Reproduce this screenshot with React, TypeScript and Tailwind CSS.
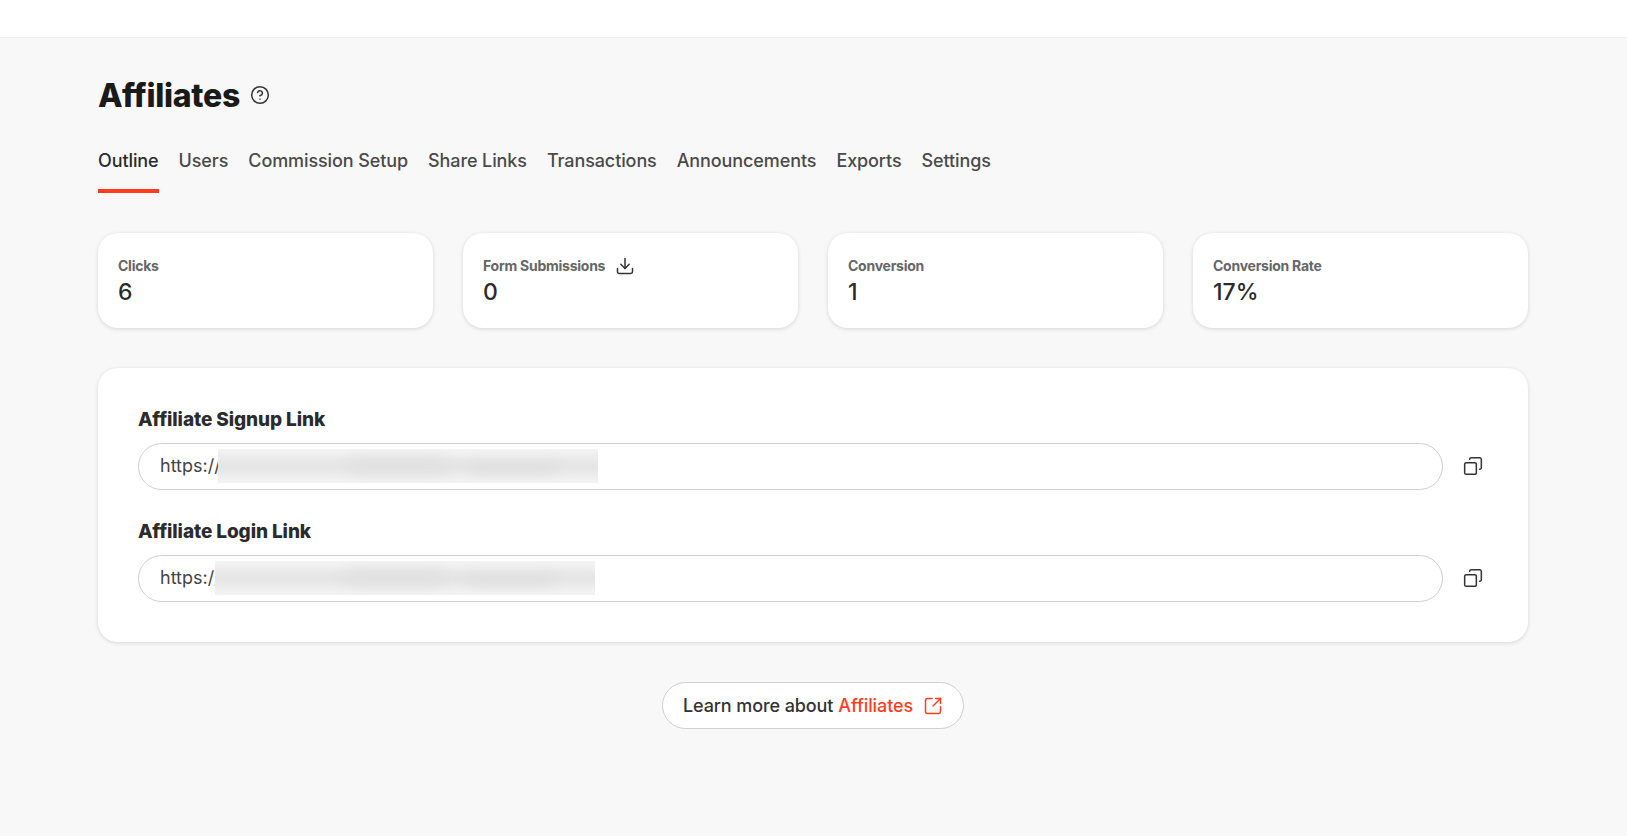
import { CircleHelp, Copy, Download, SquareArrowOutUpRight } from "lucide-react";

const tabs = ["Outline", "Users", "Commission Setup", "Share Links", "Transactions", "Announcements", "Exports", "Settings"];

const stats = [
  { label: "Clicks", value: "6" },
  { label: "Form Submissions", value: "0", download: true },
  { label: "Conversion", value: "1" },
  { label: "Conversion Rate", value: "17%" },
];

function LinkField({ label, blurClass }: { label: string; blurClass: string }) {
  return (
    <div>
      <h2 className="text-[19px] leading-[26px] font-extrabold tracking-[-0.1px] text-[#2b2b2b]">{label}</h2>
      <div className="mt-[10px] flex items-center">
        <div className="relative h-[47px] flex-1 rounded-full border border-[#cfcfcf] bg-white pl-[21px] text-lg leading-[43px] text-[#444]">
          https://
          <div className={blurClass}>
            <div className="absolute inset-x-[-10px] inset-y-[8px] bg-[#e4e4e4] blur-[6px]" />
            <div className="absolute top-[10px] left-[130px] h-[14px] w-[100px] rounded-full bg-[#e0e0e0] blur-[7px]" />
            <div className="absolute top-[12px] left-[250px] h-[12px] w-[90px] rounded-full bg-[#e0e0e0] blur-[6px]" />
          </div>
        </div>
        <button className="ml-[20px] mr-[5px] -mt-[2px] text-[#333]">
          <Copy size={20} strokeWidth={1.8} className="-scale-x-100" />
        </button>
      </div>
    </div>
  );
}

export default function App() {
  return (
    <div className="min-h-[836px] bg-[#f8f8f8] font-['Inter',sans-serif]">
      <header className="h-[38px] border-b border-[#eeeeee] bg-white" />
      <main className="mx-[98px] w-[1430px]">
        <div className="flex items-center pt-[37px]">
          <h1 className="text-[32px] leading-[42px] font-extrabold tracking-[-0.3px] text-[#1a1a1a]">Affiliates</h1>
          <CircleHelp size={20} strokeWidth={1.8} className="ml-[10px] mb-[2px] text-[#333]" />
        </div>

        <nav className="mt-[26px] flex gap-[20px] text-lg font-medium tracking-[-0.1px] text-[#4a4a4a]">
          {tabs.map((tab, i) => (
            <a key={tab} className={i === 0 ? "h-[50px] border-b-4 border-[#ff3d1a] pt-[5px] leading-[26px] text-[#2b2b2b]" : "h-[50px] pt-[5px] leading-[26px]"}>
              {tab}
            </a>
          ))}
        </nav>

        <section className="mt-[40px] grid grid-cols-4 gap-[30px]">
          {stats.map((s) => (
            <div key={s.label} className="h-[95px] rounded-[20px] bg-white px-[20px] pt-[23px] shadow-[0_1px_4px_rgba(0,0,0,0.14)]">
              <div className="flex h-[20px] items-center text-sm font-bold tracking-[-0.25px] text-[#666]">
                {s.label}
                {s.download && <Download size={20} strokeWidth={1.8} className="ml-[10px] text-[#333]" />}
              </div>
              <div className="mt-[1px] text-[23px] leading-[30px] font-medium text-[#2b2b2b]">{s.value}</div>
            </div>
          ))}
        </section>

        <section className="mt-[40px] flex h-[274px] flex-col gap-[29px] rounded-[20px] bg-white px-[40px] pt-[39px] shadow-[0_1px_4px_rgba(0,0,0,0.14)]">
          <LinkField
            label="Affiliate Signup Link"
            blurClass="absolute top-[5px] left-[79px] h-[34px] w-[380px] overflow-hidden bg-[#f5f5f5]"
          />
          <LinkField
            label="Affiliate Login Link"
            blurClass="absolute top-[5px] left-[76px] h-[34px] w-[380px] overflow-hidden bg-[#f5f5f5]"
          />
        </section>

        <div className="mt-[40px] flex justify-center">
          <a className="flex h-[47px] w-[302px] items-center justify-center rounded-full border border-[#cfcfcf] bg-white text-lg font-medium tracking-[-0.1px] text-[#333]">
            Learn more about
            <span className="ml-[5px] text-[#ff3d1a]">Affiliates</span>
            <SquareArrowOutUpRight size={20} strokeWidth={1.8} className="ml-[10px] text-[#ff3d1a]" />
          </a>
        </div>
      </main>
    </div>
  );
}
